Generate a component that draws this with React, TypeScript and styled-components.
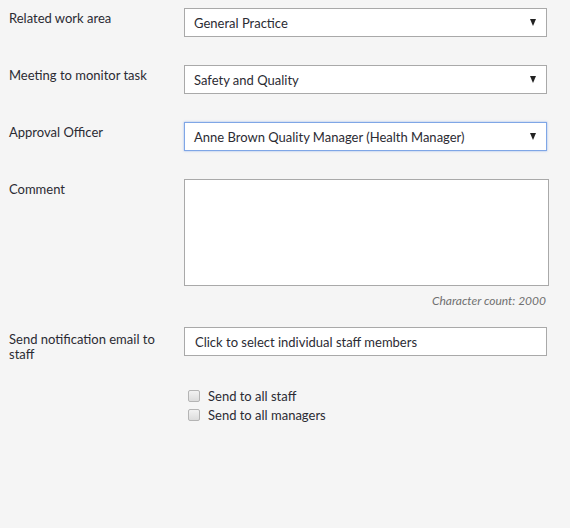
import React from 'react';
import styled, { createGlobalStyle } from 'styled-components';

const GlobalStyle = createGlobalStyle`
  html, body {
    margin: 0;
    padding: 0;
    background: #f5f5f5;
  }
  body {
    font-family: Lato, 'Open Sans', Arial, sans-serif;
    color: #2b2b33;
  }
`;

const Form = styled.div`
  width: 570px;
  height: 528px;
  padding: 8px 0 0 9px;
  box-sizing: border-box;
  background: #f5f5f5;
`;

const Row = styled.div<{ $gap?: number }>`
  display: grid;
  grid-template-columns: 175px 363px;
  margin-bottom: ${(p) => (p.$gap ?? 28)}px;
`;

const Label = styled.div`
  font-size: 13px;
  line-height: 15px;
  padding-top: 3px;
  padding-right: 20px;
`;

const SelectBox = styled.div<{ $focused?: boolean }>`
  height: 29px;
  box-sizing: border-box;
  background: #fff;
  border: 1px solid ${(p) => (p.$focused ? '#7fa6e6' : '#a9a9a9')};
  box-shadow: ${(p) => (p.$focused ? '0 0 2px rgba(90, 140, 230, 0.6)' : 'none')};
  display: flex;
  align-items: center;
  padding: 0 10px 0 9px;
  font-size: 13px;
  color: #2b2b33;
`;

const SelectText = styled.span`
  flex: 1;
`;

const Arrow = styled.span`
  width: 0;
  height: 0;
  border-left: 3.5px solid transparent;
  border-right: 3.5px solid transparent;
  border-top: 7px solid #222;
`;

const TextArea = styled.div`
  width: 365px;
  height: 107px;
  box-sizing: border-box;
  background: #fff;
  border: 1px solid #a9a9a9;
`;

const CharCount = styled.div`
  text-align: right;
  font-size: 12px;
  font-style: italic;
  color: #707070;
  margin-top: 7px;
  padding-right: 1px;
`;

const TextInput = styled.div`
  height: 29px;
  box-sizing: border-box;
  background: #fff;
  border: 1px solid #a9a9a9;
  display: flex;
  align-items: center;
  padding: 0 10px;
  font-size: 13px;
  color: #2b2b33;
`;

const InputLabel = styled(Label)`
  padding-top: 5px;
`;

const Checks = styled.div`
  display: flex;
  flex-direction: column;
  gap: 7px;
  padding-left: 179px;
`;

const CheckRow = styled.label`
  display: flex;
  align-items: center;
  gap: 8px;
  font-size: 13px;
  line-height: 12px;
`;

const Box = styled.span`
  width: 12px;
  height: 12px;
  box-sizing: border-box;
  border: 1px solid #b4b4b4;
  border-radius: 2px;
  background: linear-gradient(#f2f2f2, #dcdcdc);
`;

const Select = ({ value, focused }: { value: string; focused?: boolean }) => (
  <SelectBox $focused={focused}>
    <SelectText>{value}</SelectText>
    <Arrow />
  </SelectBox>
);

export default function App() {
  return (
    <>
      <GlobalStyle />
      <Form>
        <Row>
          <Label>Related work area</Label>
          <Select value="General Practice" />
        </Row>
        <Row>
          <Label>Meeting to monitor task</Label>
          <Select value="Safety and Quality" />
        </Row>
        <Row>
          <Label>Approval Officer</Label>
          <Select value="Anne Brown Quality Manager (Health Manager)" focused />
        </Row>
        <Row $gap={19}>
          <Label>Comment</Label>
          <div>
            <TextArea />
            <CharCount>Character count: 2000</CharCount>
          </div>
        </Row>
        <Row $gap={28}>
          <InputLabel>Send notification email to staff</InputLabel>
          <TextInput>Click to select individual staff members</TextInput>
        </Row>
        <Checks>
          <CheckRow>
            <Box />
            Send to all staff
          </CheckRow>
          <CheckRow>
            <Box />
            Send to all managers
          </CheckRow>
        </Checks>
      </Form>
    </>
  );
}
